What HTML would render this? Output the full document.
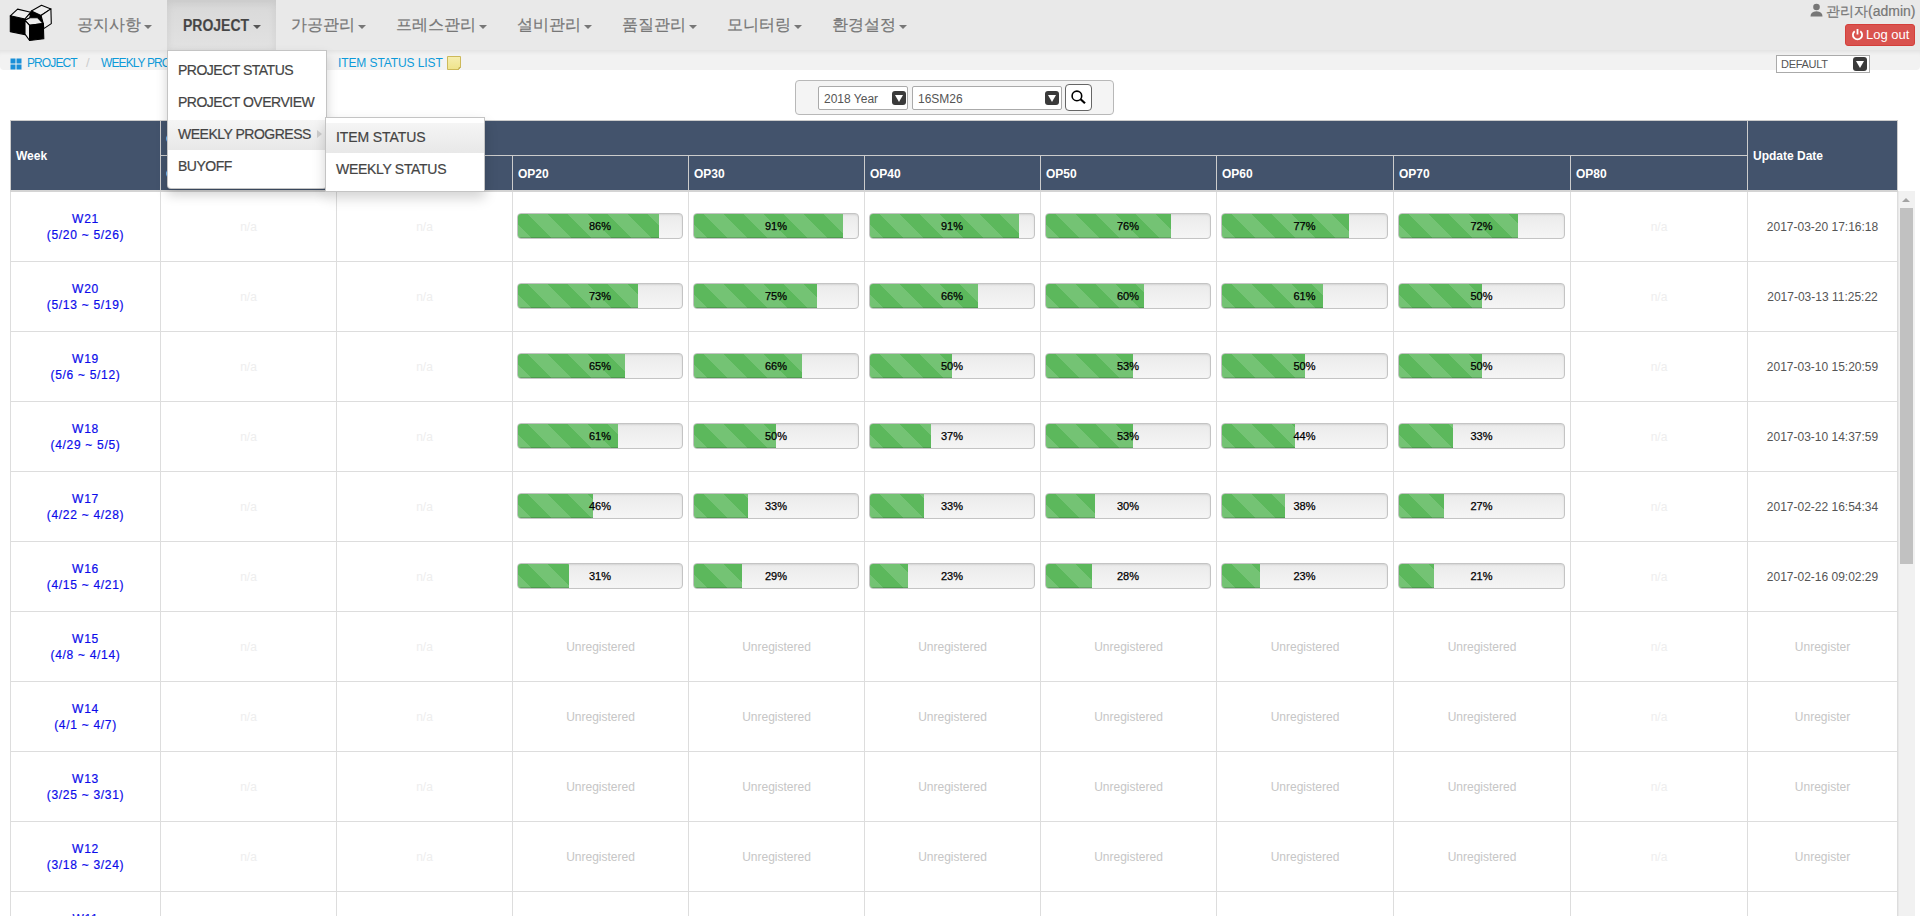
<!DOCTYPE html>
<html><head><meta charset="utf-8">
<style>
*{box-sizing:border-box;margin:0;padding:0}
html,body{width:1920px;height:916px;overflow:hidden;background:#fff;font-family:"Liberation Sans",sans-serif;color:#333}
.nav{position:absolute;left:0;top:0;width:1920px;height:50px;background:#e9e9e9}
.nav .it{position:absolute;top:0;height:50px;line-height:50px;font-size:16px;color:#777;white-space:nowrap;-webkit-text-stroke:0.2px #777}
.nav .active{background:linear-gradient(#d8d8d8,#e2e2e2);box-shadow:inset 0 3px 9px rgba(0,0,0,.075)}
.caret{display:inline-block;width:0;height:0;border-top:4px solid #777;border-left:4px solid transparent;border-right:4px solid transparent;vertical-align:middle;margin-left:3px;position:relative;top:1px}
.bc{position:absolute;left:0;top:50px;width:1920px;height:20px;background:#f2f2f2;border-radius:0 0 4px 4px;box-shadow:inset 0 5px 4px -3px rgba(0,0,0,.07)}
.bc span{position:absolute;top:1px;line-height:24px;font-size:12px;color:#0e9ad9;white-space:nowrap;letter-spacing:-0.9px}
.sbox{position:absolute;left:795px;top:80px;width:319px;height:35px;background:#f4f4f4;border:1px solid #b8b8b8;border-radius:4px}
.sel{position:absolute;background:#fff;border:1px solid #aaa;border-radius:2px;font-size:12px;color:#555;white-space:nowrap}
.arr{position:absolute;width:14px;height:14px;background:#3a3a3a;border-radius:3px}
.arr:after{content:"";position:absolute;left:3px;top:4px;border-top:7px solid #fff;border-left:4px solid transparent;border-right:4px solid transparent}
table.g{position:absolute;left:10px;top:120px;border-collapse:collapse;table-layout:fixed}
table.g th{background:#43536c;color:#fff;font-weight:bold;font-size:12px;text-align:left;border:1px solid #ccc;padding:2px 5px 0;vertical-align:middle}
table.g td{border:1px solid #ddd;height:70px;text-align:center;vertical-align:middle;font-size:12px}
table.g th.b2{border-bottom:2px solid #d4d4d4}
td.wk{color:#0c0cea;line-height:16px;font-size:13px;letter-spacing:.7px;-webkit-text-stroke:0.2px #0c0cea}
td.na{color:#eee}
td.un{color:#c6c6c6}
tr.r1 td.na,tr.r1 td.dt{padding-top:2px}
tr.r1 td.wk{padding-top:2px}
tr.rn .pb{top:-1px}
td.w5 .pb{width:167px}
td.dt{color:#555}
.pb{position:relative;margin:0 0 0 4px;width:166px;height:26px;background:linear-gradient(#ebebeb,#f5f5f5);border:1px solid #c4c4c4;border-radius:4px;box-shadow:inset 0 1px 2px rgba(0,0,0,.1);overflow:hidden}
.pb .f{position:absolute;left:0;top:0;bottom:0;background-color:#5cb85c;background-image:linear-gradient(45deg,rgba(255,255,255,.15) 25%,transparent 25%,transparent 50%,rgba(255,255,255,.15) 50%,rgba(255,255,255,.15) 75%,transparent 75%,transparent);background-size:40px 40px;background-position:10px 0;box-shadow:inset 0 -1px 0 rgba(0,0,0,.15)}
.pb .t{position:absolute;left:0;right:0;top:0;line-height:24px;text-align:center;font-size:11px;color:#000;-webkit-text-stroke:0.25px #000}
.dd{position:absolute;background:#fff;border:1px solid rgba(0,0,0,.23);border-radius:0 0 4px 4px;box-shadow:0 6px 12px rgba(0,0,0,.175)}
.dd div{position:absolute;left:0;right:0;height:30px;line-height:28px;padding-left:10px;font-size:14px;color:#444;white-space:nowrap;letter-spacing:-0.5px;-webkit-text-stroke:0.2px #444}
.dd .hl{background:linear-gradient(#f5f5f5,#e8e8e8)}

.logo{position:absolute;left:0;top:0;z-index:5}
.user{position:absolute;left:1810px;top:2px;font-size:14px;color:#777;white-space:nowrap;line-height:18px;-webkit-text-stroke:0.2px #777}
.logout{position:absolute;left:1845px;top:24px;width:70px;height:22px;background:#d9534f;border:1px solid #d43f3a;border-radius:3px;color:#fff;font-size:13px;line-height:20px;white-space:nowrap}
.dsel{position:absolute;z-index:3;left:1776px;top:55px;width:94px;height:18px;background:#fff;border:1px solid #aaa;font-size:11px;color:#555;line-height:17px;padding-left:4px;letter-spacing:-0.3px}
.sb{position:absolute;left:1898px;top:191px;width:17px;height:725px;background:#f1f1f1;border-left:1px solid #e8e8e8}
.sb .th{position:absolute;left:1px;top:17px;width:13px;height:356px;background:#c1c1c1}
.sb .up{position:absolute;left:3px;top:7px;border-bottom:4px solid #a3a3a3;border-left:4px solid transparent;border-right:4px solid transparent}
</style></head><body>
<svg class="logo" width="60" height="50" viewBox="0 0 60 50">
<g stroke="#000" stroke-width="1.1" stroke-linejoin="round">
<polygon points="10.3,15.8 25,19 25,34.6 10.3,31.8" fill="#000"/>
<polygon points="10.3,15.8 17.6,9.1 30.7,12.3 25,19" fill="#eee"/>
<polygon points="25,19 30.7,12.3 30,17.8 25,20.3" fill="#eee"/>
<polygon points="30.7,12.3 31.4,10.9 41,15.5 43.3,23.6 37.8,17.8 30,17.8" fill="#000"/>
<polygon points="31.4,10.9 41.5,5.2 50.9,8.9 41,15.5" fill="#eee"/>
<polygon points="41,15.5 50.9,8.9 51.3,23.6 43.8,28.6 43.3,23.6" fill="#eee"/>
<polygon points="25,20.3 30,17.8 37.8,17.8 43.3,23.6 29.6,25.4" fill="#eee"/>
<polygon points="25,20.3 29.6,25.4 29.6,40.5 25,34.1" fill="#eee"/>
<polygon points="29.6,25.4 43.3,23.6 43.8,38.7 29.6,40.5" fill="#000"/>
</g></svg>
<div class="nav">
  <div class="it" style="left:77px">공지사항<span class="caret"></span></div>
  <div class="it active" style="left:167px;width:109px;padding-left:16px;color:#444"><span style="display:inline-block;font-weight:bold;transform:scaleX(.875);transform-origin:0 0;margin-right:-9.5px;position:relative;top:1px">PROJECT</span><span class="caret" style="border-top-color:#555;margin-left:4px;position:relative;top:1px"></span></div>
  <div class="it" style="left:291px">가공관리<span class="caret"></span></div>
  <div class="it" style="left:396px">프레스관리<span class="caret"></span></div>
  <div class="it" style="left:517px">설비관리<span class="caret"></span></div>
  <div class="it" style="left:622px">품질관리<span class="caret"></span></div>
  <div class="it" style="left:727px">모니터링<span class="caret"></span></div>
  <div class="it" style="left:832px">환경설정<span class="caret"></span></div>
</div>
<div class="user"><svg width="13" height="14" viewBox="0 0 13 14" style="vertical-align:-1px;margin-right:3px"><circle cx="6.5" cy="4" r="3.3" fill="#777"/><path d="M0.5 13.5 Q0.5 8.5 6.5 8.3 Q12.5 8.5 12.5 13.5 Z" fill="#777"/></svg>관리자(admin)</div>
<div class="logout"><svg width="13" height="13" viewBox="0 0 13 13" style="vertical-align:-2px;margin:0 2px 0 5px"><path d="M3.7 3.2 A4.6 4.6 0 1 0 9.3 3.2" fill="none" stroke="#fff" stroke-width="1.8"/><line x1="6.5" y1="1" x2="6.5" y2="6.5" stroke="#fff" stroke-width="1.8"/></svg>Log out</div>
<div class="dsel">DEFAULT<span class="arr" style="left:76px;top:1px"></span></div>
<div class="bc">
  <svg style="position:absolute;left:10px;top:8px" width="12" height="12" viewBox="0 0 12 12"><rect x="0.5" y="0.5" width="5" height="5" fill="#1a8fd8"/><rect x="6.5" y="0.5" width="5" height="5" fill="#1a8fd8"/><rect x="0.5" y="6.5" width="5" height="5" fill="#1a8fd8"/><rect x="6.5" y="6.5" width="5" height="5" fill="#1a8fd8"/></svg>
  <svg style="position:absolute;left:446px;top:5px" width="16" height="16" viewBox="0 0 16 16"><defs><linearGradient id="sn" x1="0" y1="0" x2="0" y2="1"><stop offset="0" stop-color="#f6eeb0"/><stop offset="1" stop-color="#efe38a"/></linearGradient></defs><path d="M1.5 1.5 H14.5 V12.5 L12.5 14.5 H1.5 Z" fill="url(#sn)" stroke="#cdb95a" stroke-width="1"/><path d="M12.5 14.5 L13 12.5 L14.5 12.5" fill="none" stroke="#b8a44a" stroke-width="0.8"/></svg>
  <span style="left:27px">PROJECT</span>
  <span style="left:86px;color:#ccc;font-size:13px">/</span>
  <span style="left:101px">WEEKLY PROGRESS</span>
  <span style="left:323px;color:#ccc;font-size:13px">/</span>
  <span style="left:338px;letter-spacing:-0.1px">ITEM STATUS LIST</span>
</div>
<div class="sbox">
<div class="sel" style="left:22px;top:5px;width:90px;height:24px;line-height:25px;padding-left:5px">2018 Year<span class="arr" style="left:73px;top:4px"></span></div>
<div class="sel" style="left:116px;top:5px;width:150px;height:24px;line-height:25px;padding-left:5px">16SM26<span class="arr" style="left:132px;top:4px"></span></div>
<div class="sel" style="left:269px;top:3px;width:27px;height:27px;border-radius:4px;border-color:#666"><svg width="18" height="18" viewBox="0 0 18 18" style="position:absolute;left:4px;top:4px"><circle cx="6.9" cy="6.9" r="4.8" fill="none" stroke="#000" stroke-width="1.6"/><line x1="10.6" y1="10.3" x2="15" y2="14.3" stroke="#000" stroke-width="2.2"/></svg></div>
</div>

<table class="g" id="g">
<colgroup>
<col style="width:150px">
<col style="width:176px">
<col style="width:176px">
<col style="width:176px">
<col style="width:176px">
<col style="width:176px">
<col style="width:176px">
<col style="width:177px">
<col style="width:177px">
<col style="width:177px">
<col style="width:150px">
</colgroup>
<tr style="height:35px"><th rowspan="2" class="b2">Week</th><th colspan="9">OPERATION</th><th rowspan="2" class="b2">Update Date</th></tr>
<tr style="height:35px"><th class="b2">OP00</th><th class="b2">OP10</th><th class="b2">OP20</th><th class="b2">OP30</th><th class="b2">OP40</th><th class="b2">OP50</th><th class="b2">OP60</th><th class="b2">OP70</th><th class="b2">OP80</th></tr>
<tr class="r1" style="height:71px"><td class="wk">W21<br>(5/20 ~ 5/26)</td><td class="na">n/a</td><td class="na">n/a</td><td><div class="pb"><div class="f" style="width:141px"></div><div class="t">86%</div></div></td><td><div class="pb"><div class="f" style="width:149px"></div><div class="t">91%</div></div></td><td><div class="pb"><div class="f" style="width:149px"></div><div class="t">91%</div></div></td><td><div class="pb"><div class="f" style="width:125px"></div><div class="t">76%</div></div></td><td class="w5"><div class="pb"><div class="f" style="width:127px"></div><div class="t">77%</div></div></td><td class="w5"><div class="pb"><div class="f" style="width:119px"></div><div class="t">72%</div></div></td><td class="na">n/a</td><td class="dt">2017-03-20 17:16:18</td></tr>
<tr class="rn"><td class="wk">W20<br>(5/13 ~ 5/19)</td><td class="na">n/a</td><td class="na">n/a</td><td><div class="pb"><div class="f" style="width:120px"></div><div class="t">73%</div></div></td><td><div class="pb"><div class="f" style="width:123px"></div><div class="t">75%</div></div></td><td><div class="pb"><div class="f" style="width:108px"></div><div class="t">66%</div></div></td><td><div class="pb"><div class="f" style="width:98px"></div><div class="t">60%</div></div></td><td class="w5"><div class="pb"><div class="f" style="width:101px"></div><div class="t">61%</div></div></td><td class="w5"><div class="pb"><div class="f" style="width:83px"></div><div class="t">50%</div></div></td><td class="na">n/a</td><td class="dt">2017-03-13 11:25:22</td></tr>
<tr class="rn"><td class="wk">W19<br>(5/6 ~ 5/12)</td><td class="na">n/a</td><td class="na">n/a</td><td><div class="pb"><div class="f" style="width:107px"></div><div class="t">65%</div></div></td><td><div class="pb"><div class="f" style="width:108px"></div><div class="t">66%</div></div></td><td><div class="pb"><div class="f" style="width:82px"></div><div class="t">50%</div></div></td><td><div class="pb"><div class="f" style="width:87px"></div><div class="t">53%</div></div></td><td class="w5"><div class="pb"><div class="f" style="width:83px"></div><div class="t">50%</div></div></td><td class="w5"><div class="pb"><div class="f" style="width:83px"></div><div class="t">50%</div></div></td><td class="na">n/a</td><td class="dt">2017-03-10 15:20:59</td></tr>
<tr class="rn"><td class="wk">W18<br>(4/29 ~ 5/5)</td><td class="na">n/a</td><td class="na">n/a</td><td><div class="pb"><div class="f" style="width:100px"></div><div class="t">61%</div></div></td><td><div class="pb"><div class="f" style="width:82px"></div><div class="t">50%</div></div></td><td><div class="pb"><div class="f" style="width:61px"></div><div class="t">37%</div></div></td><td><div class="pb"><div class="f" style="width:87px"></div><div class="t">53%</div></div></td><td class="w5"><div class="pb"><div class="f" style="width:73px"></div><div class="t">44%</div></div></td><td class="w5"><div class="pb"><div class="f" style="width:54px"></div><div class="t">33%</div></div></td><td class="na">n/a</td><td class="dt">2017-03-10 14:37:59</td></tr>
<tr class="rn"><td class="wk">W17<br>(4/22 ~ 4/28)</td><td class="na">n/a</td><td class="na">n/a</td><td><div class="pb"><div class="f" style="width:75px"></div><div class="t">46%</div></div></td><td><div class="pb"><div class="f" style="width:54px"></div><div class="t">33%</div></div></td><td><div class="pb"><div class="f" style="width:54px"></div><div class="t">33%</div></div></td><td><div class="pb"><div class="f" style="width:49px"></div><div class="t">30%</div></div></td><td class="w5"><div class="pb"><div class="f" style="width:63px"></div><div class="t">38%</div></div></td><td class="w5"><div class="pb"><div class="f" style="width:45px"></div><div class="t">27%</div></div></td><td class="na">n/a</td><td class="dt">2017-02-22 16:54:34</td></tr>
<tr class="rn"><td class="wk">W16<br>(4/15 ~ 4/21)</td><td class="na">n/a</td><td class="na">n/a</td><td><div class="pb"><div class="f" style="width:51px"></div><div class="t">31%</div></div></td><td><div class="pb"><div class="f" style="width:48px"></div><div class="t">29%</div></div></td><td><div class="pb"><div class="f" style="width:38px"></div><div class="t">23%</div></div></td><td><div class="pb"><div class="f" style="width:46px"></div><div class="t">28%</div></div></td><td class="w5"><div class="pb"><div class="f" style="width:38px"></div><div class="t">23%</div></div></td><td class="w5"><div class="pb"><div class="f" style="width:35px"></div><div class="t">21%</div></div></td><td class="na">n/a</td><td class="dt">2017-02-16 09:02:29</td></tr>
<tr class="rn"><td class="wk">W15<br>(4/8 ~ 4/14)</td><td class="na">n/a</td><td class="na">n/a</td><td class="un">Unregistered</td><td class="un">Unregistered</td><td class="un">Unregistered</td><td class="un">Unregistered</td><td class="un">Unregistered</td><td class="un">Unregistered</td><td class="na">n/a</td><td class="un">Unregister</td></tr>
<tr class="rn"><td class="wk">W14<br>(4/1 ~ 4/7)</td><td class="na">n/a</td><td class="na">n/a</td><td class="un">Unregistered</td><td class="un">Unregistered</td><td class="un">Unregistered</td><td class="un">Unregistered</td><td class="un">Unregistered</td><td class="un">Unregistered</td><td class="na">n/a</td><td class="un">Unregister</td></tr>
<tr class="rn"><td class="wk">W13<br>(3/25 ~ 3/31)</td><td class="na">n/a</td><td class="na">n/a</td><td class="un">Unregistered</td><td class="un">Unregistered</td><td class="un">Unregistered</td><td class="un">Unregistered</td><td class="un">Unregistered</td><td class="un">Unregistered</td><td class="na">n/a</td><td class="un">Unregister</td></tr>
<tr class="rn"><td class="wk">W12<br>(3/18 ~ 3/24)</td><td class="na">n/a</td><td class="na">n/a</td><td class="un">Unregistered</td><td class="un">Unregistered</td><td class="un">Unregistered</td><td class="un">Unregistered</td><td class="un">Unregistered</td><td class="un">Unregistered</td><td class="na">n/a</td><td class="un">Unregister</td></tr>
<tr class="rn"><td class="wk">W11<br>(3/11 ~ 3/17)</td><td class="na">n/a</td><td class="na">n/a</td><td class="un">Unregistered</td><td class="un">Unregistered</td><td class="un">Unregistered</td><td class="un">Unregistered</td><td class="un">Unregistered</td><td class="un">Unregistered</td><td class="na">n/a</td><td class="un">Unregister</td></tr>
</table>

<div class="dd" style="left:167px;top:50px;width:160px;height:139px">
  <div style="top:5px">PROJECT STATUS</div>
  <div style="top:37px">PROJECT OVERVIEW</div>
  <div class="hl" style="top:69px">WEEKLY PROGRESS<span style="position:absolute;left:149px;top:10px;border-left:5px solid #ccc;border-top:4px solid transparent;border-bottom:4px solid transparent"></span></div>
  <div style="top:101px">BUYOFF</div>
</div>
<div class="dd" style="left:325px;top:117px;width:160px;height:75px;border-radius:0">
  <div class="hl" style="top:5px;letter-spacing:-0.1px">ITEM STATUS</div>
  <div style="top:37px;letter-spacing:-0.3px">WEEKLY STATUS</div>
</div>
<div class="sb"><div class="up"></div><div class="th"></div></div>
</body></html>
